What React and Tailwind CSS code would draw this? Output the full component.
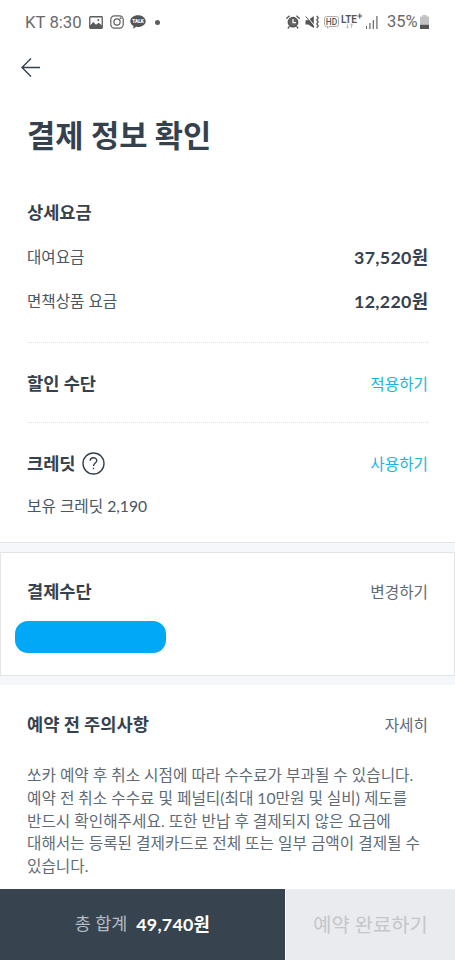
import React from "react";

function StatusBar() {
  return (
    <header className="flex h-11 items-center pl-[25px] pr-[26px] font-['Roboto','Noto_Sans_CJK_KR',sans-serif] text-[16.8px] text-[#6a6a6a]">
      <span className="w-[58px] pt-px whitespace-nowrap">KT 8:30</span>
      <svg className="ml-[6px] h-[13px] w-[14px]" viewBox="0 0 14 13">
        <rect x="0.75" y="0.75" width="12.5" height="11.5" rx="0.8" fill="none" stroke="#5c5c5c" strokeWidth="1.3" />
        <path d="M1 9.5 4.3 6 7 8.7 9.6 6.8 13 9.5V12H1Z" fill="#5c5c5c" />
        <circle cx="9.3" cy="3.9" r="1" fill="#5c5c5c" />
      </svg>
      <svg className="ml-[7px] h-[14px] w-[14px]" viewBox="0 0 14 14" fill="none" stroke="#606060" strokeWidth="1.2">
        <rect x="0.8" y="0.8" width="12.4" height="12.4" rx="3.6" />
        <circle cx="7" cy="7" r="3.1" />
        <circle cx="10.6" cy="3.3" r="0.4" />
      </svg>
      <svg className="ml-[6px] h-[14px] w-[16px]" viewBox="0 0 16 14">
        <path d="M8 .3C3.7.3.3 2.9.3 6.2c0 2.1 1.3 3.9 3.3 4.9L3 13.8l3.2-2c.6.1 1.2.2 1.8.2 4.3 0 7.7-2.6 7.7-5.8S12.3.3 8 .3Z" fill="#555" />
        <text x="8" y="8" textAnchor="middle" fontSize="4.8" fontWeight="900" fill="#fff">TALK</text>
      </svg>
      <span className="ml-[9px] size-[5px] rounded-full bg-[#5c5c5c]" />

      <svg className="ml-auto h-[14px] w-[14px] shrink-0" viewBox="0 0 14 14" fill="none" stroke="#555" strokeLinecap="round">
        <circle cx="7" cy="7.2" r="4.6" fill="#666" strokeWidth="1.6" />
        <path d="M.8 3.3 3.3 1.1M13.2 3.3 10.7 1.1M3.2 11.7 2.2 13M10.8 11.7l1 1.3" strokeWidth="1.3" />
        <path d="M7 4.4v3.3h2.5" stroke="#fff" strokeWidth="1.2" />
      </svg>
      <svg className="ml-[5px] h-[14px] w-[14px] shrink-0" viewBox="0 0 14 14">
        <path d="M.5 5.2h2.7L8.8 1v12L3.2 9.4H.5Z" fill="#555" />
        <path d="M1.8 1 10 11.5" stroke="#fff" strokeWidth="1" />
        <path d="M.8 1.5 9 12" stroke="#555" strokeWidth="1" />
        <path d="m11.8 1 1.400 1.900-1.400 2 1.400 2-1.400 2 1.400 2-1.400 2" fill="none" stroke="#666" strokeWidth="1.500" />
      </svg>
      <svg className="ml-[5px] h-[14px] w-[15px] shrink-0" viewBox="0 0 15 14">
        <path d="M3 1.5h9.5a2 2 0 0 1 2 2V9.5a2 2 0 0 1-2 2H5L3.5 13.3V11.5H2.5a2 2 0 0 1-2-2V3.5a2 2 0 0 1 2-2Z" fill="none" stroke="#999" strokeWidth=".8" />
        <text x="1.8" y="9.8" fontSize="9" fontWeight="500" fill="#555" textLength="11.4" lengthAdjust="spacingAndGlyphs">HD</text>
      </svg>
      <svg className="ml-[2px] h-[20px] w-[22px] shrink-0" viewBox="0 0 22 20">
        <text x="0" y="10.8" fontSize="10" fontWeight="600" fill="#555" textLength="16" lengthAdjust="spacingAndGlyphs">LTE</text>
        <path d="M18.8 1.5v5M16.3 4h5" stroke="#555" strokeWidth="1.2" />
        <path d="M6.5 12v4M5 14.6 6.5 16 8 14.6M10.5 16v-4M9 13.4 10.5 12 12 13.4" fill="none" stroke="#bbb" strokeWidth=".9" />
      </svg>
      <svg className="ml-[3px] h-[13px] w-[12px] shrink-0" viewBox="0 0 12 13" fill="#666">
        <path d="M0 10h1v3H0ZM3.3 7h1.2v6H3.3ZM6.7 4h1.2v9H6.7ZM10.3 0h1.2v13h-1.2Z" />
      </svg>
      <span className="ml-[9px] w-[31px] pt-px whitespace-nowrap text-[16.5px]">35%</span>
      <svg className="ml-[2px] h-[14px] w-[9px] shrink-0" viewBox="0 0 9 14">
        <path d="M2.5 0h4v1.5H9V14H0V1.5h2.5Z" fill="#c2c2c2" />
        <path d="M0 9.8h9V14H0Z" fill="#555" />
      </svg>
    </header>
  );
}

const heading = "pt-px text-[17.6px] font-bold";

function PriceRow({ label, price }) {
  return (
    <div className="flex h-11 items-center justify-between">
      <span className="pt-[2px] text-[15.6px] text-[#4a5662]">{label}</span>
      <span className="-mr-[0.3px] text-[17.8px] font-bold tracking-[0.3px]">{price}</span>
    </div>
  );
}

function SectionRow({ title, action, actionClass, children }) {
  return (
    <div className="flex h-11 items-center justify-between">
      <div className="flex items-center">
        <h2 className={heading}>{title}</h2>
        {children}
      </div>
      <button className={`pt-px text-[15.7px] ${actionClass}`}>{action}</button>
    </div>
  );
}

const notice = [
  "쏘카 예약 후 취소 시점에 따라 수수료가 부과될 수 있습니다.",
  "예약 전 취소 수수료 및 페널티(최대 10만원 및 실비) 제도를",
  "반드시 확인해주세요. 또한 반납 후 결제되지 않은 요금에",
  "대해서는 등록된 결제카드로 전체 또는 일부 금액이 결제될 수",
  "있습니다.",
];

export default function App() {
  return (
    <div className="flex h-[960px] w-[455px] flex-col overflow-hidden bg-white font-['Lato','Noto_Sans_CJK_KR',sans-serif] text-[#35424e]">
      <StatusBar />
      <nav className="flex h-[46px] items-center pl-[21px]">
        <svg className="h-[20px] w-[20px]" viewBox="0 0 20 20" fill="none" stroke="#35424e" strokeWidth="1.4">
          <path d="M19 10.5H1M10 1.5 1 10.5l9 9" />
        </svg>
      </nav>
      <main className="flex flex-1 flex-col">
        <section className="flex h-[452px] shrink-0 flex-col px-[27px]">
          <h1 className="flex h-[92px] items-center text-[30.7px] font-bold">결제 정보 확인</h1>
          <div className="mt-[9px] flex h-11 items-center">
            <h2 className={heading}>상세요금</h2>
          </div>
          <PriceRow label="대여요금" price="37,520원" />
          <PriceRow label="면책상품 요금" price="12,220원" />
          <div className="mt-[19px] border-t border-dotted border-[#dcdfe2] pt-[19px] pb-[16px]">
            <SectionRow title="할인 수단" action="적용하기" actionClass="text-[#1cb4dc]" />
          </div>
          <div className="border-t border-dotted border-[#dcdfe2] pt-[19px]">
            <SectionRow title="크레딧" action="사용하기" actionClass="text-[#1cb4dc]">
              <svg className="ml-[6px] size-[23px]" viewBox="0 0 23 23" fill="none" stroke="#35424e" strokeWidth="1.4">
                <circle cx="11.5" cy="11.5" r="10.5" />
                <path d="M8.2 8.8c0-4 6.6-4 6.6-.2 0 2.4-3.3 2.5-3.3 5.3" />
                <path d="M11.5 15.7v1.5" />
              </svg>
            </SectionRow>
            <p className="flex h-[42px] items-center text-[15.7px] text-[#4a5662]">보유 크레딧 2,190</p>
          </div>
        </section>
        <div className="h-[10px] shrink-0 border-t border-[#e1e5e8] bg-[#f5f7fa]" />
        <section className="h-[124px] shrink-0 border border-[#e1e5e8] pt-[17px]">
          <div className="px-[26px]">
            <SectionRow title="결제수단" action="변경하기" actionClass="text-[#5f6b77]" />
          </div>
          <div className="mt-[7px] ml-[14px] h-8 w-[151px] rounded-[13px] bg-[#00a8f5]" />
        </section>
        <div className="h-[9px] shrink-0 bg-[#f5f7fa]" />
        <section className="h-[204px] shrink-0 px-[27px] pt-[18px]">
          <SectionRow title="예약 전 주의사항" action="자세히" actionClass="text-[#5f6b77]" />
          <p className="mt-[17px] text-[15.7px] leading-[22.8px] text-[#5f6b77]">
            {notice.map((line) => (
              <span key={line} className="block whitespace-nowrap">{line}</span>
            ))}
          </p>
        </section>
      </main>
      <footer className="flex h-[71px] shrink-0">
        <div className="flex w-[285px] items-center justify-center gap-[9px] bg-[#374450]">
          <span className="text-[17.4px] text-[#b4bbc2]">총 합계</span>
          <strong className="text-[17.8px] font-bold tracking-[0.25px] text-white">49,740원</strong>
        </div>
        <button className="ml-px flex-1 bg-[#e9ebee] text-[19.8px] text-[#c3c7cb]">예약 완료하기</button>
      </footer>
    </div>
  );
}
